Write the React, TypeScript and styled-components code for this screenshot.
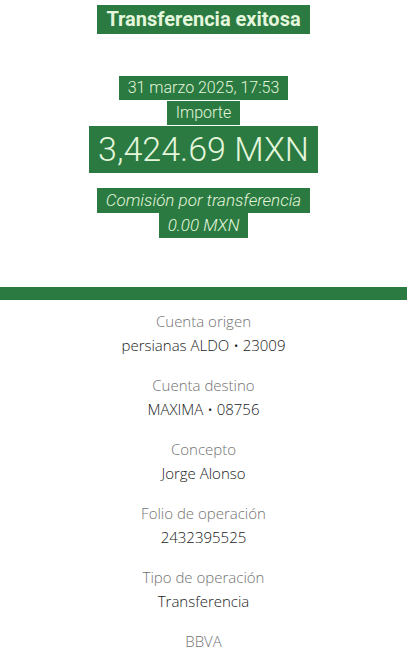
import React from "react";
import styled, { createGlobalStyle } from "styled-components";

const GlobalStyle = createGlobalStyle`
  body {
    margin: 0;
    background: #ffffff;
    font-family: "Open Sans", "Liberation Sans", sans-serif;
  }
`;

const GREEN = "#2a7a41";
const INK = "#e4f6dc";

const Page = styled.div`
  width: 407px;
  display: flex;
  flex-direction: column;
`;

const Summary = styled.section`
  display: flex;
  flex-direction: column;
  align-items: center;
  padding: 5px 0 0;
  height: 287px;
  box-sizing: border-box;
`;

// green "highlight" boxes behind each line of the receipt header
const Mark = styled.span<{ $size: number; $weight?: number; $italic?: boolean; $gap?: number }>`
  display: inline-block;
  background: ${GREEN};
  color: ${INK};
  font-family: "Roboto", "Liberation Sans", sans-serif;
  font-size: ${(p) => p.$size}px;
  font-weight: ${(p) => p.$weight ?? 400};
  font-style: ${(p) => (p.$italic ? "italic" : "normal")};
  line-height: ${(p) => Math.round(p.$size * 1.25)}px;
  padding: 2px 9px;
  margin-top: ${(p) => p.$gap ?? 0}px;
`;

const Band = styled.div`
  height: 13px;
  background: ${GREEN};
`;

const Details = styled.dl`
  margin: 0;
  padding: 11px 0 0;
  display: flex;
  flex-direction: column;
  align-items: center;
  gap: 20px;
  font-family: "Open Sans", "Liberation Sans", sans-serif;
`;

const Item = styled.div`
  display: flex;
  flex-direction: column;
  align-items: center;
  gap: 4px;
`;

const Label = styled.dt`
  font-size: 15px;
  font-weight: 300;
  color: #727272;
  line-height: 20px;
`;

const Value = styled.dd`
  margin: 0;
  font-size: 15px;
  font-weight: 300;
  color: #1a1a1a;
  line-height: 20px;
`;

const rows = [
  ["Cuenta origen", "persianas ALDO • 23009"],
  ["Cuenta destino", "MAXIMA • 08756"],
  ["Concepto", "Jorge Alonso"],
  ["Folio de operación", "2432395525"],
  ["Tipo de operación", "Transferencia"],
];

const App = () => (
  <Page>
    <GlobalStyle />
    <Summary>
      <Mark $size={20} $weight={700}>Transferencia exitosa</Mark>
      <Mark $size={16} $weight={300} $gap={42}>31 marzo 2025, 17:53</Mark>
      <Mark $size={16} $weight={300} $gap={1}>Importe</Mark>
      <Mark $size={34} $weight={300} $gap={1}>3,424.69 MXN</Mark>
      <Mark $size={17} $weight={300} $italic $gap={15}>Comisión por transferencia</Mark>
      <Mark $size={17} $weight={300} $italic>0.00 MXN</Mark>
    </Summary>
    <Band />
    <Details>
      {rows.map(([label, value]) => (
        <Item key={label}>
          <Label>{label}</Label>
          <Value>{value}</Value>
        </Item>
      ))}
      <Item>
        <Label>BBVA</Label>
      </Item>
    </Details>
  </Page>
);

export default App;
